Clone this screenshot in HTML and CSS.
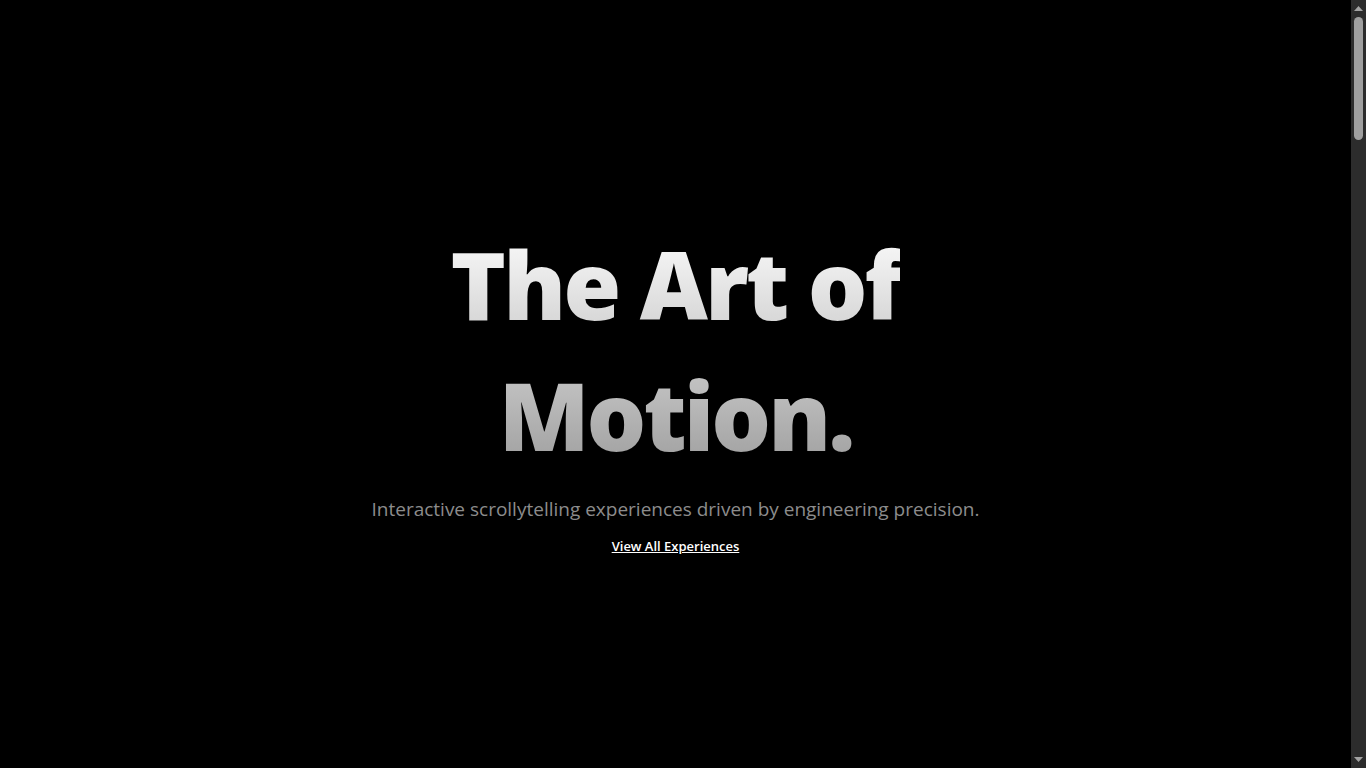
FILE: index.html
```html
<!DOCTYPE html>
<html lang="en">
<head>
<meta charset="utf-8">
<title>The Art of Motion</title>
<link rel="stylesheet" href="styles.css">
</head>
<body>
<div class="shell">
  <main class="page">
    <section class="hero">
      <h1 class="hero-title">The Art of<br>Motion.</h1>
      <p class="hero-lead">Interactive scrollytelling experiences driven by engineering precision.</p>
      <a class="hero-link" href="#experiences">View All Experiences</a>
    </section>
    <section class="chapter" id="experiences"></section>
    <section class="chapter"></section>
    <section class="chapter"></section>
    <section class="chapter chapter-end"></section>
  </main>
  <aside class="rail" aria-hidden="true">
    <span class="rail-btn">
      <svg width="9" height="5" viewBox="0 0 9 5"><polygon points="4.5,0 9,5 0,5" fill="#a3a3a3"/></svg>
    </span>
    <span class="rail-track"><span class="rail-thumb"></span></span>
    <span class="rail-btn">
      <svg width="9" height="5" viewBox="0 0 9 5"><polygon points="0,0 9,0 4.5,5" fill="#a3a3a3"/></svg>
    </span>
  </aside>
</div>
</body>
</html>
```

FILE: styles.css
```css
html {
  background: #000;
}

body {
  margin: 0;
  background: #000;
  color: #fff;
  font-family: "Open Sans", "Noto Sans", "Liberation Sans", sans-serif;
}

.shell {
  display: flex;
  align-items: flex-start;
}

.page {
  flex: 1;
  min-width: 0;
  display: flex;
  flex-direction: column;
}

/* scroll rail on the right edge */
.rail {
  position: sticky;
  top: 0;
  flex: none;
  width: 15px;
  height: 100vh;
  background: #2c2c2c;
  display: flex;
  flex-direction: column;
}

.rail-btn {
  flex: none;
  height: 17px;
  display: flex;
  align-items: center;
  justify-content: center;
}

.rail-track {
  flex: 1;
  display: flex;
  flex-direction: column;
  align-items: center;
}

.rail-thumb {
  width: 9px;
  height: 123px;
  border-radius: 5px;
  background: #9f9f9f;
}

.hero {
  min-height: 100vh;
  padding-top: 6px;
  display: flex;
  flex-direction: column;
  align-items: center;
  justify-content: center;
  text-align: center;
  box-sizing: border-box;
}

.hero-title {
  margin: 0;
  font-family: "Noto Sans", "Inter", sans-serif;
  font-weight: 900;
  font-size: 94px;
  line-height: 1.4;
  letter-spacing: -3px;
  background: linear-gradient(180deg, #ffffff 0%, #9a9a9a 100%);
  -webkit-background-clip: text;
  background-clip: text;
  color: transparent;
}

.hero-lead {
  margin: 15px 0 0;
  font-size: 19px;
  line-height: 1.35;
  color: #8c8c8c;
}

.hero-link {
  margin-top: 15px;
  font-size: 13px;
  font-weight: 600;
  color: #fff;
  text-decoration: underline;
}

.chapter {
  min-height: 100vh;
}

.chapter-end {
  min-height: 1000px;
}
```
